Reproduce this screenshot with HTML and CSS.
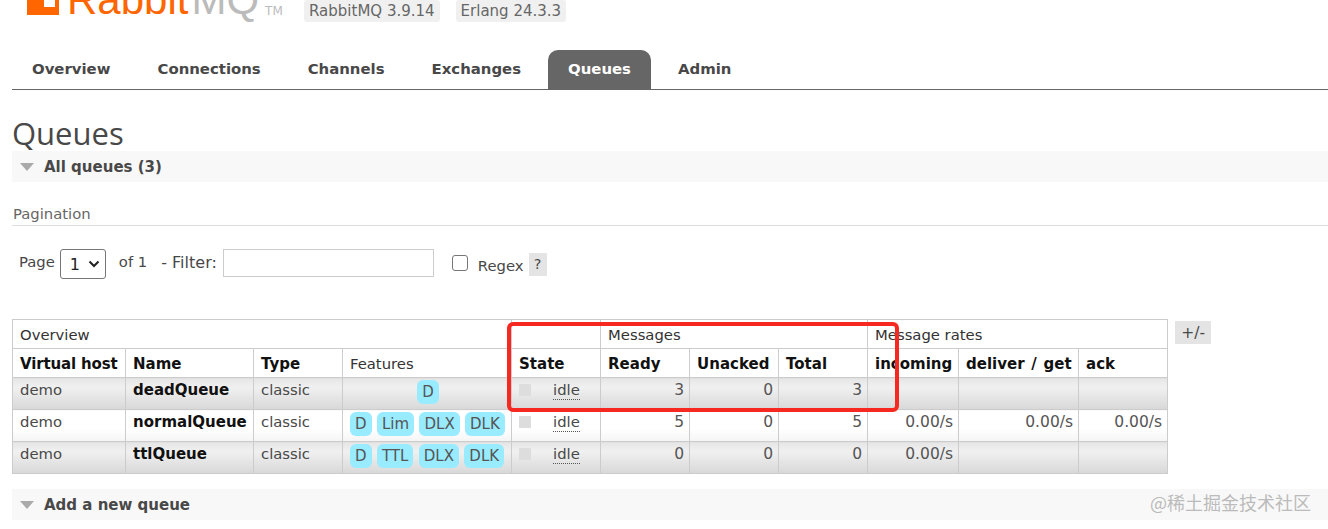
FILE: index.html
```html
<!DOCTYPE html>
<html lang="en">
<head>
<meta charset="utf-8">
<title>RabbitMQ Management</title>
<link rel="stylesheet" href="styles.css">
</head>
<body>
<header class="header">
  <div class="logo">
    <svg class="logo-mark" width="32" height="15" viewBox="0 0 32 15"><path fill="#f60" fill-rule="evenodd" d="M0 0H32V15H0ZM17 0V7H28V0Z"/></svg>
    <span class="logo-rabbit">Rabbit</span><span class="logo-mq">MQ</span><span class="logo-tm">TM</span>
  </div>
  <span class="version">RabbitMQ 3.9.14</span>
  <span class="version">Erlang 24.3.3</span>
</header>
<nav class="tabs">
  <a class="tab">Overview</a>
  <a class="tab">Connections</a>
  <a class="tab">Channels</a>
  <a class="tab">Exchanges</a>
  <a class="tab tab-active">Queues</a>
  <a class="tab">Admin</a>
</nav>
<main class="main">
  <h1 class="title">Queues</h1>
  <h2 class="section"><span class="arrow"></span>All queues (3)</h2>
  <h3 class="pagination-title">Pagination</h3>
  <div class="filter-row">
    <span class="page">Page</span>
    <span class="select">1<svg width="12" height="8" viewBox="0 0 12 8"><path d="M1.5 1.5L6 6L10.500 1.500" fill="none" stroke="#222" stroke-width="2"/></svg></span>
    <span class="of">of 1</span>
    <span class="filter-label">- Filter:</span>
    <span class="filter-input"></span>
    <span class="checkbox"></span>
    <span class="regex">Regex</span>
    <span class="help">?</span>
  </div>
  <div class="table-row">
    <table class="queues">
      <colgroup>
        <col class="c1"><col class="c2"><col class="c3"><col class="c4"><col class="c5"><col class="c6"><col class="c6"><col class="c6"><col class="c7"><col class="c8"><col class="c9">
      </colgroup>
      <thead>
        <tr class="group">
          <th colspan="4">Overview</th>
          <th></th>
          <th colspan="3">Messages</th>
          <th colspan="3">Message rates</th>
        </tr>
        <tr class="heads">
          <th class="narrow">Virtual host</th><th>Name</th><th>Type</th><th class="plain">Features</th><th>State</th><th>Ready</th><th>Unacked</th><th>Total</th><th>incoming</th><th class="wide">deliver / get</th><th>ack</th>
        </tr>
      </thead>
      <tbody>
        <tr class="alt">
          <td>demo</td><td class="name">deadQueue</td><td>classic</td>
          <td class="features center"><span class="tag">D</span></td>
          <td><div class="state"><span class="dot"></span><span class="idle">idle</span></div></td>
          <td class="num">3</td><td class="num">0</td><td class="num">3</td><td></td><td></td><td></td>
        </tr>
        <tr>
          <td>demo</td><td class="name">normalQueue</td><td>classic</td>
          <td class="features"><span class="tag">D</span><span class="tag">Lim</span><span class="tag">DLX</span><span class="tag">DLK</span></td>
          <td><div class="state"><span class="dot"></span><span class="idle">idle</span></div></td>
          <td class="num">5</td><td class="num">0</td><td class="num">5</td><td class="num">0.00/s</td><td class="num">0.00/s</td><td class="num">0.00/s</td>
        </tr>
        <tr class="alt">
          <td>demo</td><td class="name">ttlQueue</td><td>classic</td>
          <td class="features"><span class="tag">D</span><span class="tag">TTL</span><span class="tag">DLX</span><span class="tag">DLK</span></td>
          <td><div class="state"><span class="dot"></span><span class="idle">idle</span></div></td>
          <td class="num">0</td><td class="num">0</td><td class="num">0</td><td class="num">0.00/s</td><td></td><td></td>
        </tr>
      </tbody>
    </table>
    <span class="plus-minus">+/-</span>
  </div>
  <h2 class="section add"><span class="arrow"></span>Add a new queue</h2>
</main>
<div class="highlight"></div>
<div class="watermark">@稀土掘金技术社区</div>
</body>
</html>
```
FILE: styles.css
```css
html, body { margin: 0; padding: 0; }
body {
  position: relative;
  height: 529px;
  overflow: hidden;
  background: #fff;
  color: #484848;
  font-family: "DejaVu Sans", Verdana, sans-serif;
  font-size: 15px;
}
.header {
  display: flex;
  align-items: flex-start;
  height: 50px;
  padding-left: 27px;
  overflow: hidden;
}
.logo {
  display: flex;
  align-items: flex-end;
  width: 277px;
  height: 15px;
  flex: none;
}
.logo-mark { flex: none; margin-right: 8px; align-self: flex-start; }
.logo-rabbit, .logo-mq {
  font-family: "Liberation Sans", Arial, sans-serif;
  font-size: 42px;
  line-height: 36px;
  margin-bottom: -3px;
}
.logo-rabbit { color: #f60; }
.logo-mq { color: #bbb; margin-left: 3px; }
.logo-tm { color: #bbb; font-size: 12px; line-height: 14px; margin-left: 6px; margin-bottom: -3px; }
.version {
  background: #f0f0f0;
  border-radius: 3px;
  color: #666;
  font-size: 15px;
  line-height: 23px;
  padding: 0 5px;
  margin-right: 16px;
  height: 22px;
}
.tabs {
  display: flex;
  height: 39px;
  margin: 0 0 0 12px;
  border-bottom: 1px solid #666;
}
.tab {
  padding: 10px 20px 0;
  margin-right: 7px;
  font-weight: 700;
  font-size: 14.900px;
  color: #484848;
  line-height: 18px;
  border-radius: 10px 10px 0 0;
}
.tab-active { background: #666; color: #fff; }
.main { padding: 0 0 0 12px; }
.title {
  margin: 27px 0 0 0;
  height: 34px;
  line-height: 33px;
  font-size: 31px;
  font-weight: 400;
  color: #484848;
  font-family: "Open Sans", "DejaVu Sans", sans-serif;
}
.section {
  display: flex;
  align-items: center;
  margin: 0;
  height: 31px;
  padding-left: 8px;
  background: #f8f8f8;
  font-size: 15px;
  font-weight: 700;
  color: #484848;
}
.arrow {
  width: 0;
  height: 0;
  margin-right: 10px;
  border-left: 7px solid transparent;
  border-right: 7px solid transparent;
  border-top: 8px solid #aaa;
}
.pagination-title {
  margin: 22px 0 0;
  padding: 0 0 2px 1px;
  height: 19px;
  line-height: 19px;
  font-size: 14.800px;
  font-weight: 400;
  color: #666;
  border-bottom: 1px solid #ddd;
}
.filter-row {
  display: flex;
  align-items: flex-start;
  height: 93px;
  padding-left: 7px;
  font-size: 14.800px;
  color: #484848;
  line-height: 19px;
}
.page { margin-top: 26px; }
.select {
  display: flex;
  align-items: center;
  justify-content: space-between;
  box-sizing: border-box;
  width: 46px;
  height: 30px;
  margin: 23px 13px 0 5px;
  padding: 0 5px 0 9px;
  border: 1px solid #767676;
  border-radius: 3px;
  font-size: 16px;
  color: #222;
}
.of { margin-top: 26px; }
.filter-label { margin: 27px 6px 0 14px; font-size: 16px; }
.filter-input {
  box-sizing: border-box;
  width: 211px;
  height: 28px;
  margin-top: 23px;
  border: 1px solid #ccc;
}
.checkbox {
  box-sizing: border-box;
  width: 16px;
  height: 16px;
  margin: 29px 0 0 18px;
  border: 1px solid #767676;
  border-radius: 3px;
}
.regex { margin: 30px 5px 0 10px; }
.help {
  width: 18px;
  height: 23px;
  margin-top: 27px;
  line-height: 23px;
  text-align: center;
  background: #e4e4e4;
  font-size: 14.500px;
}
.table-row { display: flex; align-items: flex-start; }
.queues {
  border-collapse: collapse;
  table-layout: fixed;
  width: 1155px;
  flex: none;
  color: #484848;
}
.c1 { width: 113px; }
.c2 { width: 128px; }
.c3 { width: 89px; }
.c4 { width: 169px; }
.c5 { width: 89px; }
.c6 { width: 89px; }
.c7 { width: 91px; }
.c8 { width: 120px; }
.c9 { width: 89px; }
.queues th, .queues td {
  border: 1px solid #ccc;
  padding: 0 7px;
  text-align: left;
  white-space: nowrap;
  overflow: hidden;
}
.group th {
  height: 28px;
  font-weight: 400;
  font-size: 14.800px;
  color: #333;
}
.heads th {
  font-weight: 700;
  font-size: 15px;
  color: #111;
  padding-top: 1px;
  box-sizing: border-box;
  height: 29px;
}
.heads th.plain { font-weight: 400; font-size: 14.800px; color: #333; }
.heads th.narrow { letter-spacing: -0.15px; }
.heads th.wide { word-spacing: 1.5px; }
.queues td {
  vertical-align: top;
  padding-top: 2px;
  box-sizing: border-box;
  height: 32px;
  font-size: 14.800px;
  line-height: 19px;
  background: linear-gradient(#fff 60%, #f4f4f4);
}
.queues .alt td { background: linear-gradient(#e6e6e6, #f0f0f0 30%, #d8d8d8); }
.queues td.name { font-weight: 700; font-size: 15px; color: #111; padding-top: 3px; }
.queues td.num { text-align: right; padding: 3px 5px 0 0; color: #555; font-size: 15.500px; }
.queues td.features { padding: 2px 0 0 7px; }
.queues td.center { text-align: center; padding-left: 2px; }
.tag {
  display: inline-block;
  height: 24px;
  line-height: 25px;
  margin-right: 5.400px;
  padding: 0 5px;
  border-radius: 6px;
  background: #99ebff;
  color: #555;
  font-size: 15px;
}
.center .tag { margin-right: 0; }
.state { display: flex; align-items: flex-start; margin-top: 1px; }
.dot {
  width: 12px;
  height: 12px;
  margin: 3px 22px 0 0;
  background: #ddd;
}
.idle { border-bottom: 1px dotted #555; line-height: 18px; height: 18px; }
.plus-minus {
  width: 36px;
  height: 23px;
  margin: 2px 0 0 7px;
  line-height: 25px;
  text-align: center;
  background: #e4e4e4;
  font-size: 15.500px;
}
.section.add { margin-top: 15px; }
.highlight {
  position: absolute;
  left: 507px;
  top: 322px;
  box-sizing: border-box;
  width: 392px;
  height: 90px;
  border: 4px solid #f7281f;
  border-radius: 6px;
}
.watermark {
  position: absolute;
  left: 1150px;
  top: 490px;
  font-family: "Noto Sans CJK SC", sans-serif;
  font-size: 18px;
  line-height: 24px;
  color: #bbb;
}
```
